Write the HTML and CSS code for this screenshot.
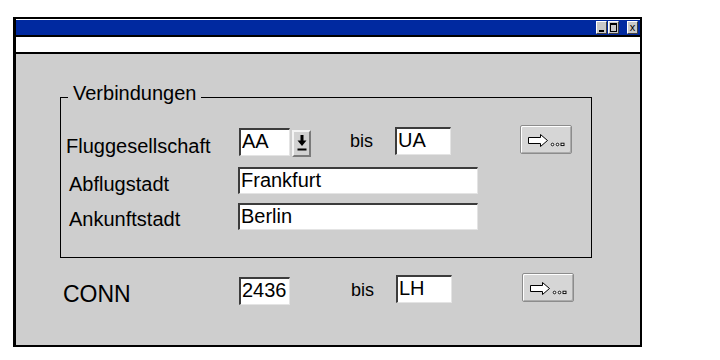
FILE: index.html
```html
<!DOCTYPE html>
<html lang="de">
<head>
    <meta charset="UTF-8">
    <title>Verbindungen</title>
    <link rel="stylesheet" href="styles.css">
</head>
<body>
    <div class="window">
        <div class="titlebar">
            <span class="tb-btn tb-min"><i></i></span>
            <span class="tb-btn tb-max"><i></i></span>
            <span class="tb-btn tb-close">x</span>
        </div>
        <div class="menubar"></div>

        <div class="client">
            <fieldset class="group">
                <legend>Verbindungen</legend>

                <div class="row row-first">
                    <span class="label label-first">Fluggesellschaft</span>
                    <input class="field field-short field-aa" type="text" value="AA">
                    <span class="drop-btn">
                        <svg width="10" height="17" viewBox="0 0 10 17">
                            <rect x="3.5" y="0" width="3" height="6" fill="#000"/>
                            <polygon points="0.5,5.5 9.5,5.5 5,11" fill="#000"/>
                            <rect x="0.5" y="13.5" width="9" height="2" fill="#000"/>
                        </svg>
                    </span>
                    <span class="bis bis-first">bis</span>
                    <input class="field field-mid field-ua" type="text" value="UA">
                    <button class="more-btn more-first">
                        <svg width="38" height="13" viewBox="0 0 38 13">
                            <path d="M0.5 3.5 H12.5 V0.5 L19.5 6.5 L12.5 12.5 V9.5 H0.5 Z" fill="#fff" stroke="#000"/>
                            <circle cx="24.5" cy="10.5" r="1.3" fill="#fff" stroke="#000" stroke-width="0.9"/>
                            <circle cx="29.5" cy="10.5" r="1.3" fill="#fff" stroke="#000" stroke-width="0.9"/>
                            <rect x="33" y="9.2" width="3" height="2.4" fill="#fff" stroke="#000" stroke-width="0.9"/>
                        </svg>
                    </button>
                </div>

                <div class="row row-second">
                    <span class="label label-indent label-abflug">Abflugstadt</span>
                    <input class="field field-long" type="text" value="Frankfurt">
                </div>

                <div class="row row-third">
                    <span class="label label-indent label-ankunft">Ankunftstadt</span>
                    <input class="field field-long" type="text" value="Berlin">
                </div>
            </fieldset>

            <div class="row row-conn">
                <span class="conn-label">CONN</span>
                <input class="field field-short field-2436" type="text" value="2436">
                <span class="bis bis-conn">bis</span>
                <input class="field field-mid field-lh" type="text" value="LH">
                <button class="more-btn more-conn">
                    <svg width="38" height="13" viewBox="0 0 38 13">
                        <path d="M0.5 3.5 H12.5 V0.5 L19.5 6.5 L12.5 12.5 V9.5 H0.5 Z" fill="#fff" stroke="#000"/>
                        <circle cx="24.5" cy="10.5" r="1.3" fill="#fff" stroke="#000" stroke-width="0.9"/>
                        <circle cx="29.5" cy="10.5" r="1.3" fill="#fff" stroke="#000" stroke-width="0.9"/>
                        <rect x="33" y="9.2" width="3" height="2.4" fill="#fff" stroke="#000" stroke-width="0.9"/>
                    </svg>
                </button>
            </div>
        </div>
    </div>
</body>
</html>
```

FILE: styles.css
```css
body {
    margin: 0;
    background-color: #fff;
    font-family: "Liberation Sans", Arial, sans-serif;
    color: #000;
}
.window {
    box-sizing: border-box;
    width: 629px;
    height: 330px;
    margin: 17px 0 0 13px;
    border: 2px solid #000;
    border-left-width: 3px;
    background-color: #cecece;
    display: flex;
    flex-direction: column;
}
.titlebar {
    height: 15px;
    border-top: 1px solid #fff;
    border-bottom: 2px solid #000;
    background-color: #0029a0;
    display: flex;
    justify-content: flex-end;
    align-items: flex-end;
    padding-right: 2px;
}
.tb-btn {
    box-sizing: border-box;
    width: 11px;
    height: 13px;
    margin-left: 1px;
    margin-bottom: 1px;
    background-color: #c8c8c8;
    border-top: 1px solid #fff;
    border-left: 1px solid #fff;
    border-right: 1px solid #404040;
    border-bottom: 1px solid #404040;
    position: relative;
    font-size: 11px;
    line-height: 10px;
    text-align: center;
}
.tb-close {
    margin-left: 8px;
}
.tb-min i {
    position: absolute;
    left: 2px;
    bottom: 1px;
    width: 5px;
    height: 2px;
    background-color: #000;
}
.tb-max i {
    position: absolute;
    left: 1px;
    top: 1px;
    width: 5px;
    height: 6px;
    border: 1px solid #000;
    border-top-width: 2px;
}
.menubar {
    height: 15px;
    background-color: #fff;
    border-bottom: 2px solid #000;
}
.client {
    flex: 1;
    padding-top: 28px;
}
.group {
    box-sizing: border-box;
    width: 532px;
    margin: 0 0 0 44px;
    padding: 13px 0 27px 0;
    border: 1px solid #000;
    min-inline-size: 0;
}
.group legend {
    margin-left: 7px;
    padding: 0 5px 7px 5px;
    font-size: 20px;
    line-height: 23px;
}
.row {
    display: flex;
    align-items: flex-start;
}
.row-first {
    height: 32px;
}
.row-second {
    height: 27px;
    margin-top: 10px;
}
.row-third {
    height: 27px;
    margin-top: 9px;
}
.row-conn {
    height: 30px;
    margin-top: 15px;
}
.label {
    font-size: 20px;
    line-height: 23px;
    white-space: nowrap;
}
.label-first {
    width: 173px;
    margin-left: 5px;
    margin-top: 10px;
}
.label-indent {
    width: 169px;
    margin-left: 8px;
}
.label-abflug {
    margin-top: 6px;
}
.label-ankunft {
    margin-top: 5px;
}
.conn-label {
    width: 176px;
    margin-left: 47px;
    margin-top: 8px;
    font-size: 23px;
    line-height: 26px;
}
.field {
    box-sizing: border-box;
    height: 28px;
    margin: 0;
    padding: 0 0 2px 1px;
    border-top: 2px solid #3c3c3c;
    border-left: 2px solid #3c3c3c;
    border-right: 1px solid #e4e4e4;
    border-bottom: 1px solid #e4e4e4;
    border-radius: 0;
    background-color: #fff;
    font-family: "Liberation Sans", Arial, sans-serif;
    font-size: 20px;
    color: #000;
    outline: none;
}
.field-short {
    width: 51px;
}
.field-mid {
    width: 56px;
}
.field-long {
    width: 240px;
    height: 27px;
}
.field-aa {
    margin-top: 3px;
}
.field-ua {
    margin-top: 2px;
}
.field-2436 {
    margin-top: 4px;
}
.field-lh {
    margin-top: 2px;
}
.drop-btn {
    box-sizing: border-box;
    width: 19px;
    height: 27px;
    margin: 5px 0 0 2px;
    background-color: #d2d2d2;
    border-top: 2px solid #f4f4f4;
    border-left: 2px solid #f4f4f4;
    border-right: 2px solid #7a7a7a;
    border-bottom: 2px solid #7a7a7a;
    display: flex;
    justify-content: center;
    align-items: center;
}
.bis {
    width: 45px;
    font-size: 18px;
    line-height: 21px;
}
.bis-first {
    margin-left: 39px;
    margin-top: 6px;
}
.bis-conn {
    margin-left: 61px;
    margin-top: 7px;
}
.more-btn {
    box-sizing: border-box;
    width: 52px;
    height: 29px;
    padding: 1px 0 0 1px;
    background-color: #d6d6d6;
    border: 1px solid #8c8c8c;
    border-radius: 2px;
    box-shadow: inset 1px 1px 0 #fff, inset -1px -1px 0 #ababab;
    display: flex;
    justify-content: center;
    align-items: center;
}
.more-first {
    margin-left: 69px;
}
.more-conn {
    margin-left: 70px;
}
```
